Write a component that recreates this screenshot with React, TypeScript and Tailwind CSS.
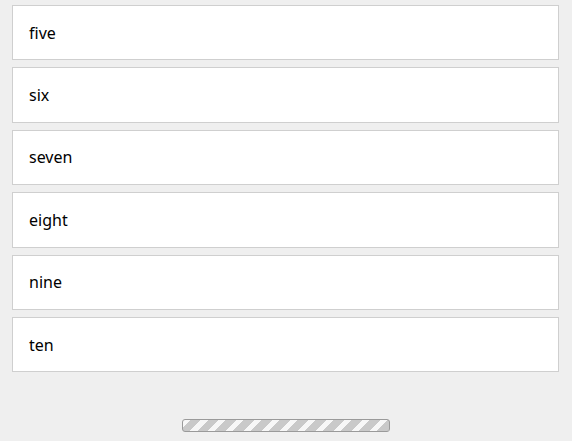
const items = ["five", "six", "seven", "eight", "nine", "ten"];

export default function App() {
  return (
    <div className="w-[572px] h-[441px] bg-[#efefef] overflow-hidden font-['Noto_Sans',sans-serif]">
      <div className="flex flex-col gap-[7px] pt-[5px] pl-3 pr-[13px]">
        {items.map((item) => (
          <div
            key={item}
            className="h-[55.4px] flex items-center px-4 bg-white border border-[#cfcfcf] text-[16px] text-black"
          >
            {item}
          </div>
        ))}
      </div>
      <div className="flex justify-center mt-[47px]">
        <div className="w-[208px] h-[13px] rounded-[3px] border border-[#9a9a9a] bg-[repeating-linear-gradient(135deg,#f7f7f7_0px,#f7f7f7_5px,#c9c9c9_5px,#c9c9c9_12.7px)]" />
      </div>
    </div>
  );
}
